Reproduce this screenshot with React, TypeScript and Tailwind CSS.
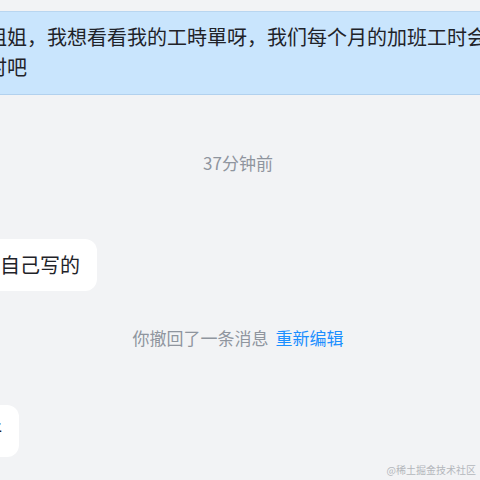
const cjk = { fontFamily: '"Microsoft YaHei", "Noto Sans CJK SC", "Noto Sans", sans-serif' };

function Bubble({ text, offset }: { text: string; offset: string }) {
  return (
    <div className="flex flex-col">
      <div className={`self-start ${offset} h-[52px] flex items-center bg-white rounded-[12px] pl-[16px] pr-[17px]`}>
        <span className="whitespace-nowrap text-[20px] leading-[28px] text-[#1f2329]">{text}</span>
      </div>
    </div>
  );
}

export default function App() {
  return (
    <div className="relative w-[480px] h-[480px] overflow-hidden bg-[#f2f3f5] flex flex-col" style={cjk}>
      <div className="mt-[11px] h-[84px] bg-[#c9e5fd] border-t border-[#b9d6f0] border-b border-b-[#b2d1ee] pt-[10px] overflow-hidden">
        <div className="-ml-[33px] text-[20px] leading-[30px] text-[#1f2329] whitespace-nowrap">
          <div>小姐姐，我想看看我的工時單呀，我们每个月的加班工时会不会</div>
          <div className="pl-[20px]">时吧</div>
        </div>
      </div>

      <div className="mt-[56px] text-center text-[17px] leading-[24px] text-[#8f959e] -ml-[4px]">37分钟前</div>

      <div className="mt-[64px]">
        <Bubble text="是自己写的" offset="-ml-[36px]" />
      </div>

      <div className="mt-[35px] text-center text-[17px] leading-[24px] text-[#8f959e] -ml-[4px]">
        你撤回了一条消息<span className="ml-[7px] text-[#1b8fff]">重新编辑</span>
      </div>

      <div className="mt-[55px]">
        <Bubble text="好" offset="-ml-[34px]" />
      </div>

      <div className="absolute right-[4px] bottom-[3px] text-[10px] leading-[14px] text-[#b4b7bc]">
        @稀土掘金技术社区
      </div>
    </div>
  );
}
